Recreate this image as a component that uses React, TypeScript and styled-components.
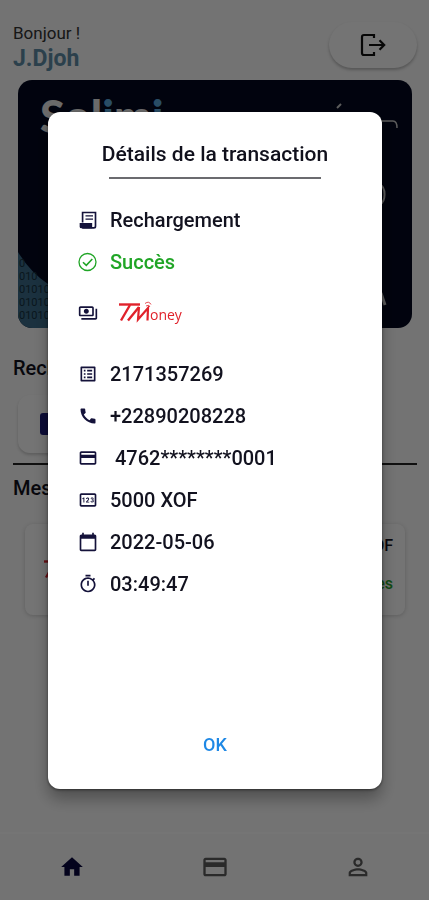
import React from "react";
import styled, { createGlobalStyle } from "styled-components";
import {
  MdCalendarToday,
  MdCall,
  MdCreditCard,
  MdHome,
  MdListAlt,
  MdOutlinePayments,
  MdOutlinePin,
  MdOutlineTimer,
  MdPersonOutline,
} from "react-icons/md";

const GlobalStyle = createGlobalStyle`
  *, *::before, *::after { box-sizing: border-box; }
  body {
    margin: 0;
    background: #fafafa;
    color: #10101c;
    font-family: Roboto, "Liberation Sans", sans-serif;
  }
  button { font: inherit; border: 0; padding: 0; background: none; cursor: pointer; }
`;

const Screen = styled.div`
  min-height: 100vh;
  display: flex;
  flex-direction: column;
`;

const Main = styled.main`
  flex: 1;
  padding: 22px 12px 0 13px;
`;

const Header = styled.header`
  display: flex;
  justify-content: space-between;
  align-items: flex-start;
`;

const Greeting = styled.p`
  margin: 0;
  font-size: 17px;
  line-height: 22px;
  color: #333;
`;

const UserName = styled.h1`
  margin: 0;
  font-size: 23px;
  line-height: 30px;
  font-weight: 700;
  color: #5f8ca5;
`;

const LogoutButton = styled.button`
  display: grid;
  place-items: center;
  width: 88px;
  height: 46px;
  border-radius: 23px;
  background: #fdfdfd;
  color: #111;
  box-shadow: 0 2px 3px rgba(0, 0, 0, 0.25);
`;

const BankCard = styled.section`
  position: relative;
  height: 248px;
  margin: 6px 5px 0;
  border-radius: 14px;
  overflow: hidden;
  background: #03081f;
`;

const Brand = styled.div`
  padding: 8px 22px;
  font-family: Lato, sans-serif;
  font-size: 45px;
  line-height: 56px;
  font-weight: 900;
  color: #e6e6e6;
  span { color: #5aa7dc; }
`;

const CardArt = styled.svg`
  position: absolute;
  inset: auto auto 0 0;
`;

const CardMarks = styled.svg`
  position: absolute;
  top: 0;
  right: 0;
`;

const SectionTitle = styled.h2`
  margin: 0;
  font-size: 20px;
  line-height: 24px;
  font-weight: 500;
`;

const Recharge = styled.section`
  padding: 28px 0 10px;
  border-bottom: 2px solid #222;
`;

const RechargeTile = styled.button`
  display: flex;
  align-items: center;
  width: 110px;
  height: 58px;
  margin: 15px 5px 0;
  padding-left: 22px;
  border-radius: 12px;
  background: #fdfdfd;
  box-shadow: 0 2px 3px rgba(0, 0, 0, 0.18);
`;

const CardChip = styled.span`
  width: 34px;
  height: 22px;
  border-radius: 3px;
  background: #1b1b78;
`;

const History = styled.section`
  padding-top: 11px;
`;

const HistoryItem = styled.article`
  display: flex;
  justify-content: space-between;
  align-items: center;
  height: 91px;
  margin: 24px 12px 0;
  padding: 0 12px 0 18px;
  border-radius: 8px;
  background: #fdfdfd;
  box-shadow: 0 1px 4px rgba(0, 0, 0, 0.18);
`;

const Amounts = styled.div`
  display: grid;
  gap: 18px;
  padding-bottom: 10px;
  text-align: right;
  font-size: 16px;
  line-height: 20px;
  font-weight: 500;
`;

const Success = styled.span`
  color: #27a32b;
`;

const BottomNav = styled.nav`
  display: grid;
  grid-template-columns: repeat(3, 1fr);
  height: 68px;
  border-top: 2px solid #fff;
`;

const NavButton = styled.button<{ $active?: boolean }>`
  display: grid;
  place-items: center;
  color: ${(p) => (p.$active ? "#0a0840" : "#5c5c5c")};
`;

const Scrim = styled.div`
  position: fixed;
  inset: 0;
  display: flex;
  padding: 112px 47px 111px 48px;
  background: rgba(0, 0, 0, 0.54);
`;

const Dialog = styled.section`
  flex: 1;
  min-width: 0;
  display: flex;
  flex-direction: column;
  padding: 30px 30px 29px;
  border-radius: 12px;
  background: #fff;
  box-shadow: 0 10px 16px rgba(0, 0, 0, 0.3), 0 1px 3px rgba(0, 0, 0, 0.5);
`;

const DialogTitle = styled.h2`
  margin: 0;
  text-align: center;
  white-space: nowrap;
  font-size: 21px;
  line-height: 25px;
  font-weight: 500;
`;

const TitleRule = styled.hr`
  align-self: stretch;
  height: 2px;
  margin: 10px 31px 0;
  border: 0;
  background: #6b6b6f;
`;

const Details = styled.ul`
  flex: 1;
  margin: 20px 0 0;
  padding: 0;
  list-style: none;
`;

const Detail = styled.li<{ $tone?: string; $tall?: boolean }>`
  display: flex;
  align-items: center;
  gap: ${(p) => (p.$tall ? 20 : 12)}px;
  height: ${(p) => (p.$tall ? 60 : 42)}px;
  margin-bottom: ${(p) => (p.$tall ? 10 : 0)}px;
  font-size: 20px;
  line-height: 24px;
  font-weight: 500;
  color: ${(p) => p.$tone ?? "#12121f"};
  white-space: pre;
  > svg { flex: none; color: ${(p) => p.$tone ?? "#14123a"}; }
`;

const OkButton = styled.button`
  align-self: center;
  padding: 0 16px;
  font-size: 18px;
  line-height: 30px;
  font-weight: 500;
  color: #1e88e5;
`;

const LogoutIcon = () => (
  <svg width="26" height="24" viewBox="0 0 26 24" fill="none" stroke="currentColor" strokeWidth="2.2" aria-hidden="true">
    <path d="M14 5V2H4Q2 2 2 4v16q0 2 2 2h10v-3" />
    <path d="M9 12H24M19.500 7.200 24.200 12l-4.700 4.800" />
  </svg>
);

const ReceiptIcon = () => (
  <svg width="20" height="20" viewBox="0 0 24 24" fill="none" stroke="currentColor" aria-hidden="true">
    <path d="M5.500 15V3H21V19.500Q21 21.500 19 21.500H5" strokeWidth="2" />
    <path d="M9 7h9M9 11h9" strokeWidth="1.600" />
    <path d="M2 15.500H17V22H4Q2 22 2 20Z" fill="currentColor" stroke="none" />
  </svg>
);

const SuccessIcon = () => (
  <svg width="20" height="20" viewBox="0 0 20 20" fill="none" stroke="currentColor" strokeWidth="1.300" aria-hidden="true">
    <circle cx="9.500" cy="10" r="8.500" />
    <path d="M5 10.200 8.300 13.400 14.300 7" strokeWidth="1.600" />
  </svg>
);

const TMoneyLogo = () => (
  <svg width="66" height="26" viewBox="0 0 66 26" role="img" aria-label="TMoney" fill="#e0222b">
    <g fill="none" stroke="#e0222b">
      <path d="M1 4.500H22" strokeWidth="2.400" />
      <path d="M12 5 3 20.500M10 20.500 21 7" strokeWidth="2.400" />
      <path d="M21 7 20 19.500 30 8 29.500 20.500" strokeWidth="2.200" />
      <path d="M27 3.500q4-3 6 1M28 6q3-2 4 1" strokeWidth="0.800" />
    </g>
    <text x="32" y="20" fontFamily="Open Sans, sans-serif" fontSize="14" fontWeight="500">oney</text>
  </svg>
);

const details = [
  { icon: MdListAlt, text: "2171357269" },
  { icon: MdCall, text: "+22890208228" },
  { icon: MdCreditCard, text: " 4762********0001" },
  { icon: MdOutlinePin, text: "5000 XOF" },
  { icon: MdCalendarToday, text: "2022-05-06" },
  { icon: MdOutlineTimer, text: "03:49:47" },
];

export default function App() {
  return (
    <>
      <GlobalStyle />
      <Screen>
        <Main>
          <Header>
            <div>
              <Greeting>Bonjour !</Greeting>
              <UserName>J.Djoh</UserName>
            </div>
            <LogoutButton aria-label="Déconnexion">
              <LogoutIcon />
            </LogoutButton>
          </Header>
          <BankCard>
            <Brand>
              Sol<span>i</span>m<span>i</span>
            </Brand>
            <CardArt width="60" height="78" viewBox="0 0 60 78" aria-hidden="true">
              <path d="M0 2Q12 22 30 34T60 52V78H0Z" fill="#3b6c8a" />
              <g fill="#16303f" fontFamily="Roboto, sans-serif" fontSize="11">
                <text x="1" y="17">0</text>
                <text x="1" y="30">010</text>
                <text x="1" y="43">01010</text>
                <text x="1" y="56">010101</text>
                <text x="1" y="69">010101</text>
              </g>
            </CardArt>
            <CardMarks width="90" height="248" viewBox="0 0 90 248" fill="none" stroke="#c9c9c9" strokeWidth="1.500" aria-hidden="true">
              <path d="M15 28l4-4" strokeWidth="2" />
              <path d="M56 41H71q4 0 4 7" />
              <path d="M58 105c6 2 6 17 0 19" strokeWidth="2" />
              <path d="M59 213l4 12" strokeWidth="3" />
            </CardMarks>
          </BankCard>
          <Recharge>
            <SectionTitle>Recharger</SectionTitle>
            <RechargeTile aria-label="Carte">
              <CardChip />
            </RechargeTile>
          </Recharge>
          <History>
            <SectionTitle>Mes transactions</SectionTitle>
            <HistoryItem>
              <TMoneyLogo />
              <Amounts>
                <span>5000 XOF</span>
                <Success>Succès</Success>
              </Amounts>
            </HistoryItem>
          </History>
        </Main>
        <BottomNav>
          <NavButton $active aria-label="Accueil">
            <MdHome size={26} />
          </NavButton>
          <NavButton aria-label="Carte">
            <MdCreditCard size={28} />
          </NavButton>
          <NavButton aria-label="Profil">
            <MdPersonOutline size={28} />
          </NavButton>
        </BottomNav>
      </Screen>
      <Scrim>
        <Dialog role="dialog" aria-modal="true" aria-labelledby="dialog-title">
          <DialogTitle id="dialog-title">Détails de la transaction</DialogTitle>
          <TitleRule />
          <Details>
            <Detail>
              <ReceiptIcon />
              Rechargement
            </Detail>
            <Detail $tone="#20a526">
              <SuccessIcon />
              Succès
            </Detail>
            <Detail $tall>
              <MdOutlinePayments size={20} />
              <TMoneyLogo />
            </Detail>
            {details.map(({ icon: Icon, text }) => (
              <Detail key={text}>
                <Icon size={20} />
                {text}
              </Detail>
            ))}
          </Details>
          <OkButton>OK</OkButton>
        </Dialog>
      </Scrim>
    </>
  );
}
